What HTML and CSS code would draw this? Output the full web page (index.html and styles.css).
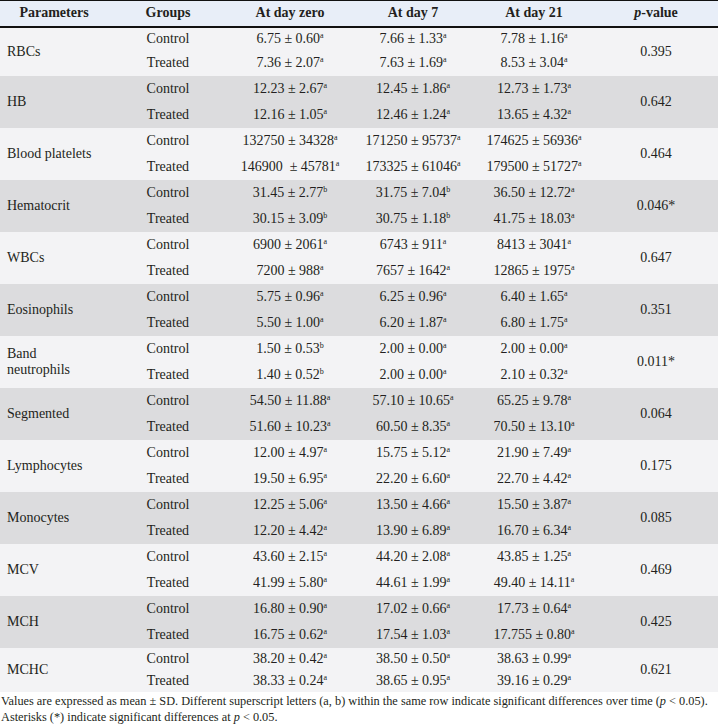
FILE: index.html
```html
<!DOCTYPE html>
<html lang="en">
<head>
<meta charset="utf-8">
<title>Hematological parameters</title>
<link rel="stylesheet" href="styles.css">
</head>
<body>
<table class="data">
  <colgroup>
    <col class="c-param"><col class="c-group"><col class="c-d0"><col class="c-d7"><col class="c-d21"><col class="c-p">
  </colgroup>
  <thead>
    <tr class="head">
      <th>Parameters</th><th>Groups</th><th>At day zero</th><th>At day 7</th><th>At day 21</th><th><i>p</i>-value</th>
    </tr>
  </thead>
  <tbody class="band light">
    <tr class="r-first"><td class="param" rowspan="2">RBCs</td><td>Control</td><td>6.75 ± 0.60<sup>a</sup></td><td>7.66 ± 1.33<sup>a</sup></td><td>7.78 ± 1.16<sup>a</sup></td><td rowspan="2">0.395</td></tr>
    <tr class="r-first2"><td>Treated</td><td>7.36 ± 2.07<sup>a</sup></td><td>7.63 ± 1.69<sup>a</sup></td><td>8.53 ± 3.04<sup>a</sup></td></tr>
  </tbody>
  <tbody class="band dark">
    <tr><td class="param" rowspan="2">HB</td><td>Control</td><td>12.23 ± 2.67<sup>a</sup></td><td>12.45 ± 1.86<sup>a</sup></td><td>12.73 ± 1.73<sup>a</sup></td><td rowspan="2">0.642</td></tr>
    <tr><td>Treated</td><td>12.16 ± 1.05<sup>a</sup></td><td>12.46 ± 1.24<sup>a</sup></td><td>13.65 ± 4.32<sup>a</sup></td></tr>
  </tbody>
  <tbody class="band light">
    <tr><td class="param" rowspan="2">Blood platelets</td><td>Control</td><td>132750 ± 34328<sup>a</sup></td><td>171250 ± 95737<sup>a</sup></td><td>174625 ± 56936<sup>a</sup></td><td rowspan="2">0.464</td></tr>
    <tr><td>Treated</td><td>146900&nbsp; ± 45781<sup>a</sup></td><td>173325 ± 61046<sup>a</sup></td><td>179500 ± 51727<sup>a</sup></td></tr>
  </tbody>
  <tbody class="band dark">
    <tr><td class="param" rowspan="2">Hematocrit</td><td>Control</td><td>31.45 ± 2.77<sup>b</sup></td><td>31.75 ± 7.04<sup>b</sup></td><td>36.50 ± 12.72<sup>a</sup></td><td rowspan="2">0.046*</td></tr>
    <tr><td>Treated</td><td>30.15 ± 3.09<sup>b</sup></td><td>30.75 ± 1.18<sup>b</sup></td><td>41.75 ± 18.03<sup>a</sup></td></tr>
  </tbody>
  <tbody class="band light">
    <tr><td class="param" rowspan="2">WBCs</td><td>Control</td><td>6900 ± 2061<sup>a</sup></td><td>6743 ± 911<sup>a</sup></td><td>8413 ± 3041<sup>a</sup></td><td rowspan="2">0.647</td></tr>
    <tr><td>Treated</td><td>7200 ± 988<sup>a</sup></td><td>7657 ± 1642<sup>a</sup></td><td>12865 ± 1975<sup>a</sup></td></tr>
  </tbody>
  <tbody class="band dark">
    <tr><td class="param" rowspan="2">Eosinophils</td><td>Control</td><td>5.75 ± 0.96<sup>a</sup></td><td>6.25 ± 0.96<sup>a</sup></td><td>6.40 ± 1.65<sup>a</sup></td><td rowspan="2">0.351</td></tr>
    <tr><td>Treated</td><td>5.50 ± 1.00<sup>a</sup></td><td>6.20 ± 1.87<sup>a</sup></td><td>6.80 ± 1.75<sup>a</sup></td></tr>
  </tbody>
  <tbody class="band light">
    <tr><td class="param" rowspan="2">Band neutrophils</td><td>Control</td><td>1.50 ± 0.53<sup>b</sup></td><td>2.00 ± 0.00<sup>a</sup></td><td>2.00 ± 0.00<sup>a</sup></td><td rowspan="2">0.011*</td></tr>
    <tr><td>Treated</td><td>1.40 ± 0.52<sup>b</sup></td><td>2.00 ± 0.00<sup>a</sup></td><td>2.10 ± 0.32<sup>a</sup></td></tr>
  </tbody>
  <tbody class="band dark">
    <tr><td class="param" rowspan="2">Segmented</td><td>Control</td><td>54.50 ± 11.88<sup>a</sup></td><td>57.10 ± 10.65<sup>a</sup></td><td>65.25 ± 9.78<sup>a</sup></td><td rowspan="2">0.064</td></tr>
    <tr><td>Treated</td><td>51.60 ± 10.23<sup>a</sup></td><td>60.50 ± 8.35<sup>a</sup></td><td>70.50 ± 13.10<sup>a</sup></td></tr>
  </tbody>
  <tbody class="band light">
    <tr><td class="param" rowspan="2">Lymphocytes</td><td>Control</td><td>12.00 ± 4.97<sup>a</sup></td><td>15.75 ± 5.12<sup>a</sup></td><td>21.90 ± 7.49<sup>a</sup></td><td rowspan="2">0.175</td></tr>
    <tr><td>Treated</td><td>19.50 ± 6.95<sup>a</sup></td><td>22.20 ± 6.60<sup>a</sup></td><td>22.70 ± 4.42<sup>a</sup></td></tr>
  </tbody>
  <tbody class="band dark">
    <tr><td class="param" rowspan="2">Monocytes</td><td>Control</td><td>12.25 ± 5.06<sup>a</sup></td><td>13.50 ± 4.66<sup>a</sup></td><td>15.50 ± 3.87<sup>a</sup></td><td rowspan="2">0.085</td></tr>
    <tr><td>Treated</td><td>12.20 ± 4.42<sup>a</sup></td><td>13.90 ± 6.89<sup>a</sup></td><td>16.70 ± 6.34<sup>a</sup></td></tr>
  </tbody>
  <tbody class="band light">
    <tr><td class="param" rowspan="2">MCV</td><td>Control</td><td>43.60 ± 2.15<sup>a</sup></td><td>44.20 ± 2.08<sup>a</sup></td><td>43.85 ± 1.25<sup>a</sup></td><td rowspan="2">0.469</td></tr>
    <tr><td>Treated</td><td>41.99 ± 5.80<sup>a</sup></td><td>44.61 ± 1.99<sup>a</sup></td><td>49.40 ± 14.11<sup>a</sup></td></tr>
  </tbody>
  <tbody class="band dark">
    <tr><td class="param" rowspan="2">MCH</td><td>Control</td><td>16.80 ± 0.90<sup>a</sup></td><td>17.02 ± 0.66<sup>a</sup></td><td>17.73 ± 0.64<sup>a</sup></td><td rowspan="2">0.425</td></tr>
    <tr><td>Treated</td><td>16.75 ± 0.62<sup>a</sup></td><td>17.54 ± 1.03<sup>a</sup></td><td>17.755 ± 0.80<sup>a</sup></td></tr>
  </tbody>
  <tbody class="band light tight">
    <tr><td class="param" rowspan="2">MCHC</td><td>Control</td><td>38.20 ± 0.42<sup>a</sup></td><td>38.50 ± 0.50<sup>a</sup></td><td>38.63 ± 0.99<sup>a</sup></td><td rowspan="2">0.621</td></tr>
    <tr><td>Treated</td><td>38.33 ± 0.24<sup>a</sup></td><td>38.65 ± 0.95<sup>a</sup></td><td>39.16 ± 0.29<sup>a</sup></td></tr>
  </tbody>
</table>
<div class="note">
  <span class="note-line">Values are expressed as mean ± SD. Different superscript letters (a, b) within the same row indicate significant differences over time (<i>p</i> &lt; 0.05).</span>
  <span class="note-line">Asterisks (*) indicate significant differences at <i>p</i> &lt; 0.05.</span>
</div>
</body>
</html>
```

FILE: styles.css
```css
html, body {
  margin: 0;
  padding: 0;
  background: #ffffff;
}

body {
  font-family: "Liberation Serif", "Times New Roman", serif;
  color: #231f20;
  width: 718px;
}

.data {
  width: 718px;
  border-collapse: collapse;
  table-layout: fixed;
  font-size: 14px;
  line-height: 16px;
}

.c-param { width: 108px; }
.c-group { width: 120px; }
.c-d0 { width: 124px; }
.c-d7 { width: 122px; }
.c-d21 { width: 120px; }
.c-p { width: 124px; }

.data th,
.data td {
  padding: 0;
  text-align: center;
  vertical-align: middle;
  white-space: nowrap;
}

.head {
  background: #e8eef8;
  height: 22px;
  border-top: 1px solid #111111;
  border-bottom: 2px solid #111111;
}

.head th {
  font-weight: bold;
}

.data tr {
  height: 26px;
}

.data tr.r-first { height: 24px; }
.data tr.r-first2 { height: 25px; }
.data .tight tr { height: 22px; }

.light { background: #f3f3f5; }
.dark { background: #dcdcde; }

.data td.param {
  text-align: left;
  padding: 0 8px 0 7px;
  white-space: normal;
}

sup {
  font-size: 8px;
  line-height: 0;
  vertical-align: 5px;
}

.note {
  display: flex;
  flex-direction: column;
  padding: 1px 0 0 1px;
  font-size: 12.3px;
  line-height: 16px;
}

.note-line {
  white-space: nowrap;
}
```
